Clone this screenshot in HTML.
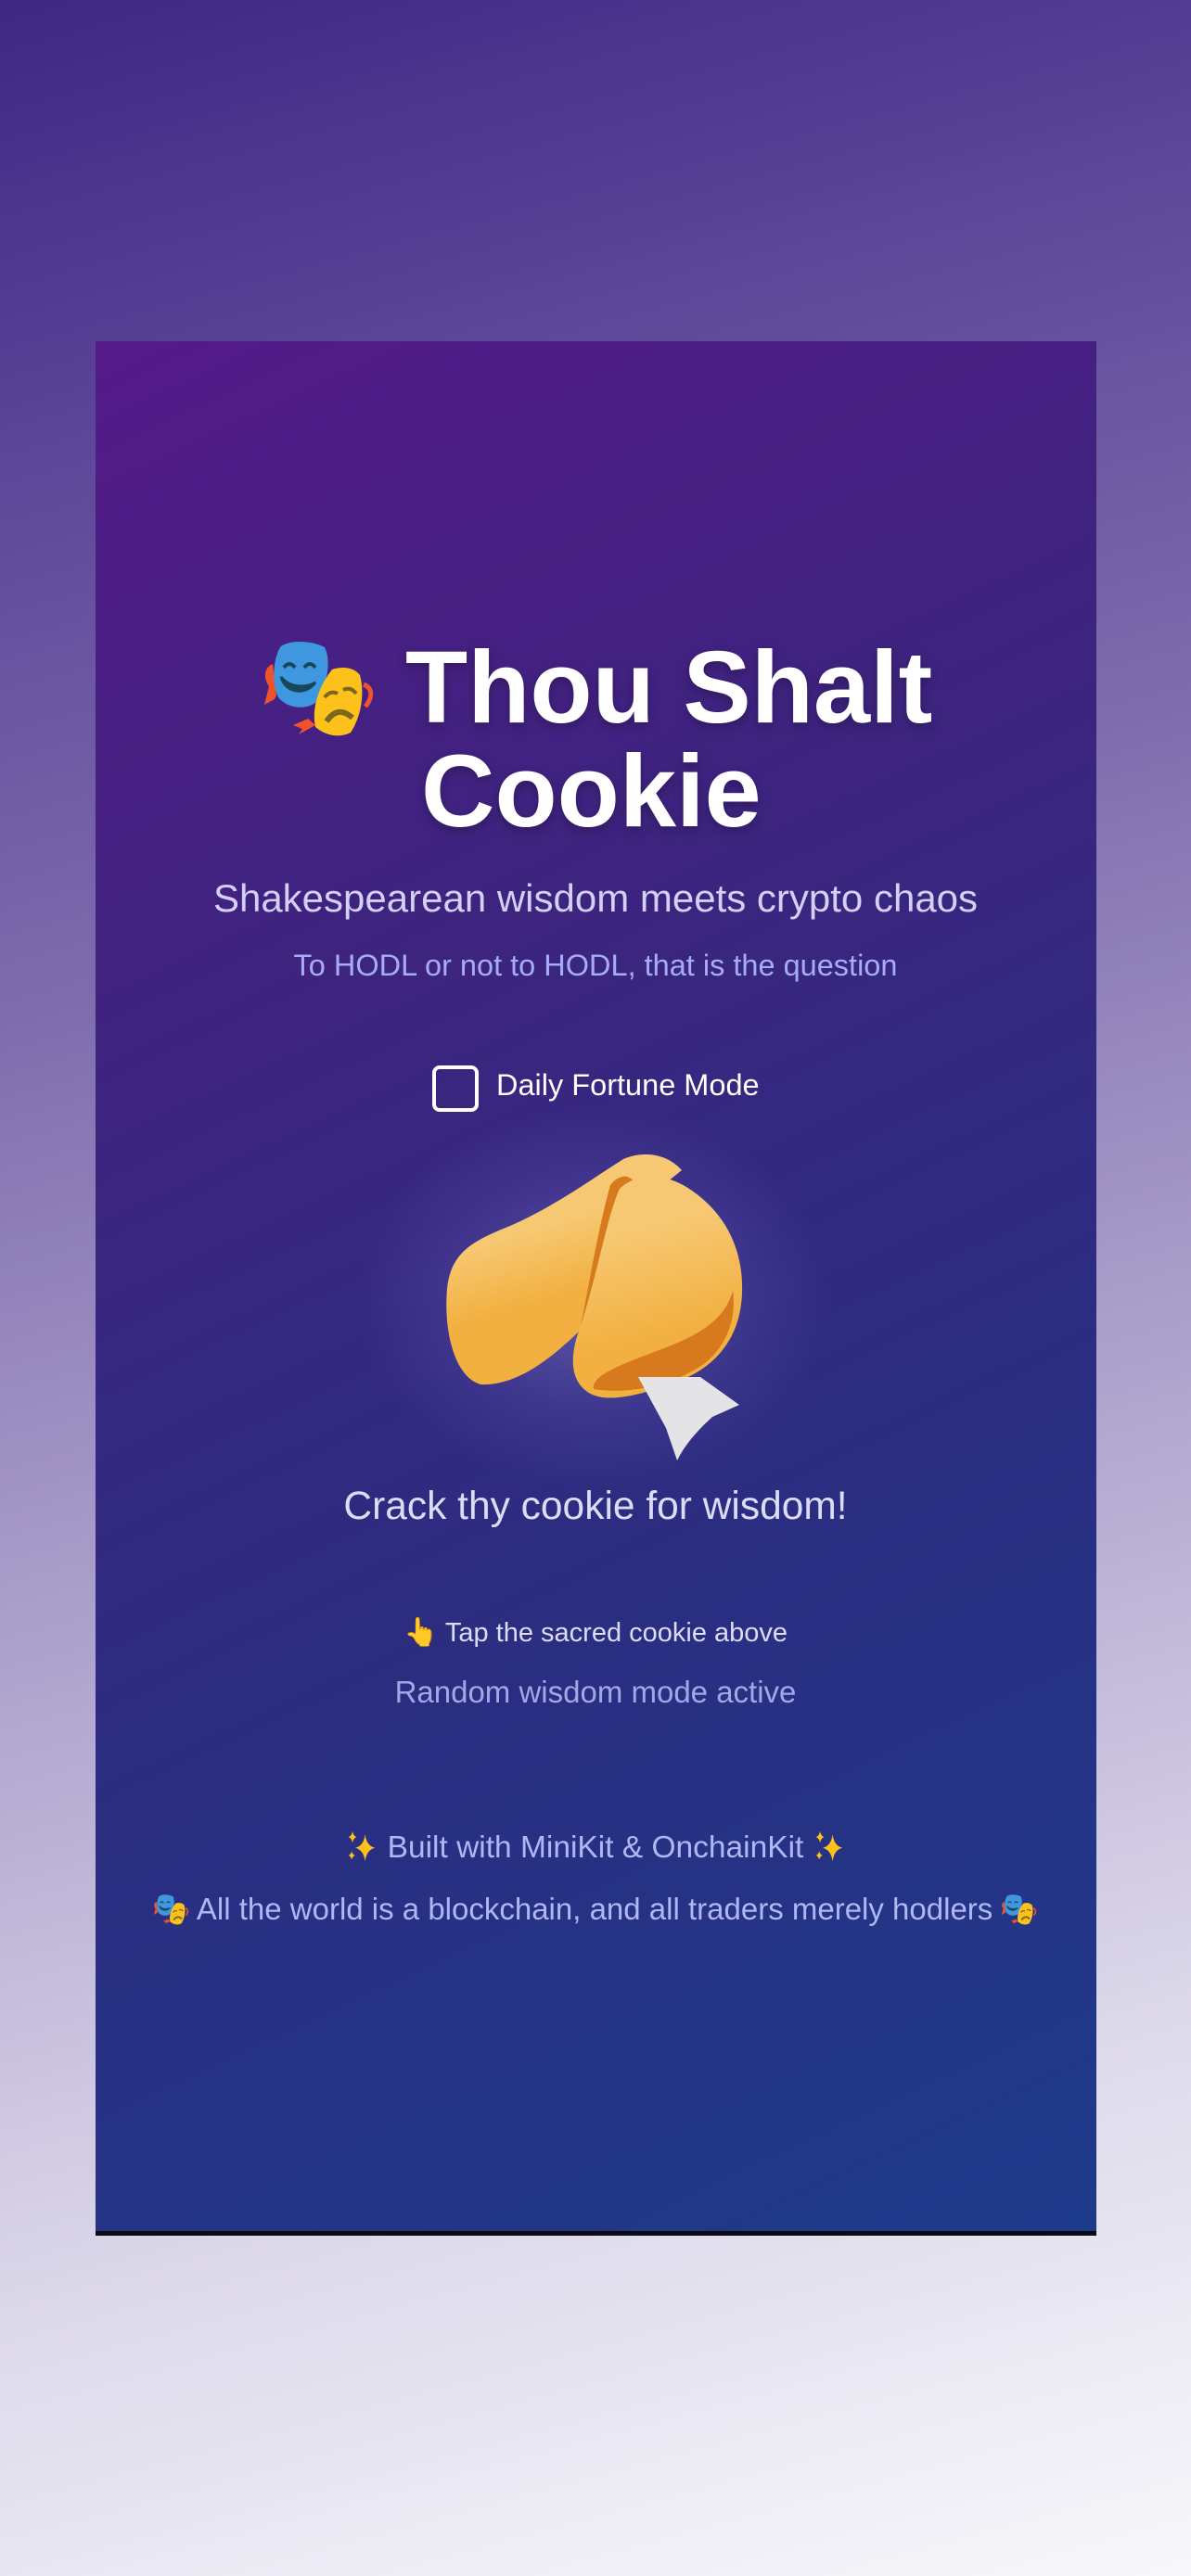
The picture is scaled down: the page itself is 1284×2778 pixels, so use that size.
<!DOCTYPE html>
<html><head><meta charset="utf-8">
<style>
html,body{margin:0;padding:0}
body{width:1284px;height:2778px;position:relative;overflow:hidden;
background:linear-gradient(165deg,#3e2784 0%,#5a4497 15%,#7d6cad 35%,#b3a8d0 60%,#dcd8ea 80%,#f8f8fb 100%);
font-family:"Liberation Sans",sans-serif}
.card{position:absolute;left:103px;top:368px;width:1079px;height:2038px;
background:linear-gradient(155deg,#541a88 0%,#3e237f 30%,#2c2c80 60%,#1e3a8a 100%);
border-bottom:5px solid #0b0b16}
.glow{position:absolute;left:380px;top:1190px;width:520px;height:420px;
background:radial-gradient(ellipse at center,rgba(150,150,220,0.45) 0%,rgba(120,110,200,0.2) 40%,rgba(80,60,160,0) 70%)}
.t{position:absolute;left:0;width:1284px;text-align:center;white-space:nowrap}
h1{position:absolute;margin:0;left:437px;top:686px;font-size:110px;line-height:112px;font-weight:bold;color:#fff;text-shadow:0 4px 10px rgba(0,0,0,0.25)}
</style></head><body>
<svg width="0" height="0" style="position:absolute">
<defs>
<symbol id="mask" viewBox="0 0 150 130">
<path d="M24,46 C14,50 14,62 20,70 L15,90 L26,84 L28,80" fill="#f0522e"/>
<path d="M122,68 C132,72 132,82 124,92" fill="none" stroke="#f0522e" stroke-width="5"/>
<path d="M62,105 L46,112 L56,116 L52,122 L70,112" fill="#f0522e"/>
<path d="M32,28 C40,20 65,20 80,28 C88,45 82,70 70,88 C58,96 40,94 30,82 C22,65 25,40 32,28Z" fill="#3f97e0"/>
<path d="M33,60 C38,78 60,80 70,66 C60,72 42,72 33,60Z" fill="#17485a" stroke="#17485a" stroke-width="3"/>
<path d="M36,50 Q42,42 48,50 M58,50 Q64,42 70,50" fill="none" stroke="#17485a" stroke-width="4"/>
<path d="M88,52 C100,48 112,50 118,58 C124,80 118,105 108,120 C96,126 82,124 70,114 C66,96 72,72 88,52Z" fill="#fcc21b"/>
<path d="M80,82 Q86,74 94,78 M100,74 Q108,70 114,78" fill="none" stroke="#7b6620" stroke-width="4"/>
<path d="M82,108 Q94,90 110,104" fill="none" stroke="#7b6620" stroke-width="6"/>
</symbol>
<symbol id="spark" viewBox="0 0 40 40">
<path d="M24,6 Q26,20 36,22 Q26,24 24,38 Q22,24 12,22 Q22,20 24,6Z" fill="#fcc21b"/>
<path d="M9,2 Q10,8 14,9 Q10,10 9,16 Q8,10 4,9 Q8,8 9,2Z" fill="#fcc21b"/>
<path d="M8,26 Q9,30 12,31 Q9,32 8,36 Q7,32 4,31 Q7,30 8,26Z" fill="#fcc21b"/>
</symbol>
</defs></svg>
<div class="card"></div>
<div class="glow"></div>

<svg style="position:absolute;left:270px;top:670px" width="150" height="130"><use href="#mask"/></svg>
<h1>Thou Shalt<br><span style="margin-left:17px">Cookie</span></h1>

<div class="t" style="top:945px;font-size:42px;color:#d3d0f5">Shakespearean wisdom meets crypto chaos</div>
<div class="t" style="top:1023px;font-size:32.5px;color:#a6acf5">To HODL or not to HODL, that is the question</div>

<div style="position:absolute;left:466px;top:1149px;width:42px;height:42px;border:4px solid #fff;border-radius:8px"></div>
<div style="position:absolute;left:535px;top:1152px;font-size:32.5px;color:#fff">Daily Fortune Mode</div>

<svg style="position:absolute;left:400px;top:1100px" width="500" height="500" viewBox="0 0 500 500">
<defs>
<linearGradient id="gl" x1="0" y1="0" x2="0.3" y2="1"><stop offset="0.4" stop-color="#f7c873"/><stop offset="0.7" stop-color="#f2b040"/></linearGradient>
<linearGradient id="gr" x1="0" y1="0" x2="0.2" y2="1"><stop offset="0.3" stop-color="#f7c873"/><stop offset="0.8" stop-color="#f2b040"/></linearGradient>
</defs>
<path d="M118,393 C90,385 78,335 82,290 C86,250 110,238 150,222 C200,200 240,170 272,150 C295,140 320,145 335,162 L300,190 C280,240 262,290 230,330 C200,360 160,395 118,393Z" fill="url(#gl)"/>
<path d="M258,178 C272,160 292,168 284,200 C272,245 252,290 226,330 C236,280 246,220 258,178Z" fill="#d77a1d"/>
<path d="M226,330 C245,270 255,210 268,182 C282,168 310,162 340,180 C380,205 402,245 400,295 C398,345 370,375 330,390 C290,405 250,415 232,400 C212,385 216,355 226,330Z" fill="url(#gr)"/>
<path d="M240,398 C238,385 260,375 300,360 C340,345 380,330 390,292 C394,320 385,350 360,370 C330,392 280,405 240,398Z" fill="#d77a1d"/>
<path d="M288,385 L355,385 L397,415 L368,428 C355,440 340,455 330,475 L318,440 Z" fill="#e4e4e6"/>
</svg>

<div class="t" style="top:1601px;font-size:42.5px;color:#dcdcf6">Crack thy cookie for wisdom!</div>

<div class="t" style="top:1743px;font-size:29px;color:#dcdcf4"><span style="font-size:30px">👆</span> Tap the sacred cookie above</div>
<div class="t" style="top:1806px;font-size:33px;color:#a2a8e6">Random wisdom mode active</div>

<div class="t" style="top:1973px;font-size:33.5px;color:#b1b6f5"><svg width="36" height="36" style="vertical-align:-6px"><use href="#spark"/></svg> Built with MiniKit &amp; OnchainKit <svg width="36" height="36" style="vertical-align:-6px"><use href="#spark"/></svg></div>
<div class="t" style="top:2040px;font-size:33px;color:#b1b6f5"><svg width="40" height="35" viewBox="20 15 110 110" style="vertical-align:-6px"><use href="#mask" width="150" height="130"/></svg> All the world is a blockchain, and all traders merely hodlers <svg width="40" height="35" viewBox="20 15 110 110" style="vertical-align:-6px"><use href="#mask" width="150" height="130"/></svg></div>
</body></html>
